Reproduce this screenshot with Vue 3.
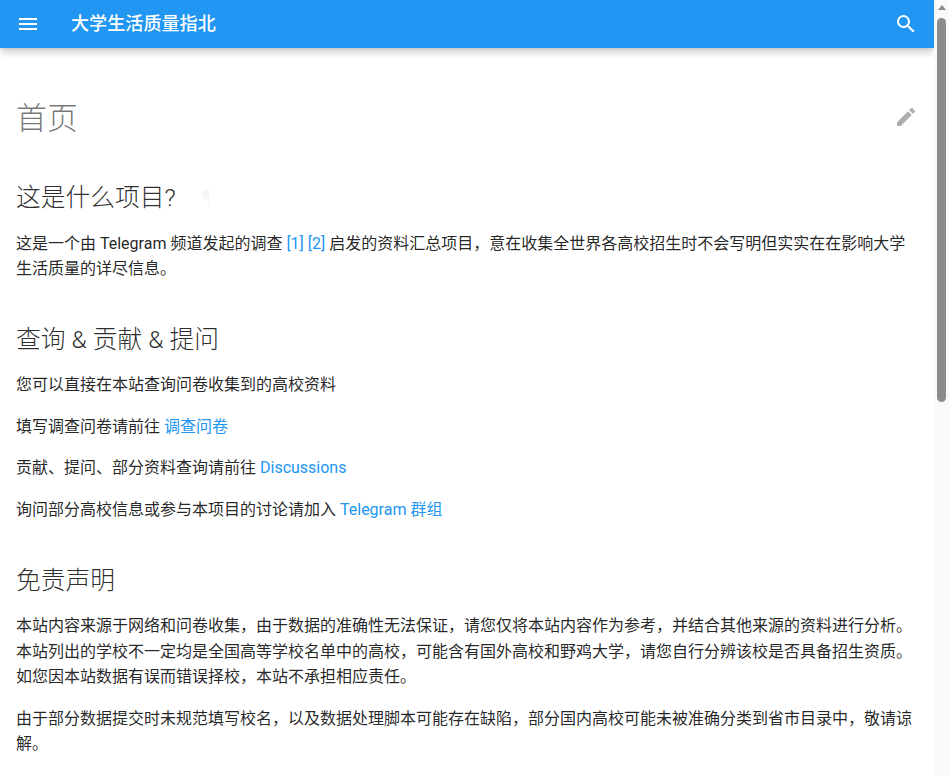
<script setup>
const menuPath = 'M3 6h18v2H3V6m0 5h18v2H3v-2m0 5h18v2H3v-2Z'
const searchPath = 'M9.5 3A6.5 6.5 0 0 1 16 9.5c0 1.61-.59 3.09-1.56 4.23l.27.27h.79l5 5-1.5 1.5-5-5v-.79l-.27-.27A6.516 6.516 0 0 1 9.5 16 6.5 6.5 0 0 1 3 9.5 6.5 6.5 0 0 1 9.5 3m0 2C7 5 5 7 5 9.5S7 14 9.5 14 14 12 14 9.5 12 5 9.5 5Z'
const pencilPath = 'M20.71 7.04c.39-.39.39-1.04 0-1.41l-2.34-2.34c-.37-.39-1.02-.39-1.41 0l-1.84 1.83 3.75 3.75M3 17.25V21h3.75L17.81 9.93l-3.75-3.75L3 17.25Z'
</script>

<template>
  <div class="page">
    <div class="main">
      <header class="bar">
        <button class="icon-btn" aria-label="menu">
          <svg viewBox="0 0 24 24" width="24" height="24"><path :d="menuPath" /></svg>
        </button>
        <div class="site-title">大学生活质量指北</div>
        <button class="icon-btn search" aria-label="search">
          <svg viewBox="0 0 24 24" width="24" height="24"><path :d="searchPath" /></svg>
        </button>
      </header>
      <article class="content">
        <a class="edit" aria-label="edit">
          <svg viewBox="0 0 24 24" width="24" height="24"><path :d="pencilPath" /></svg>
        </a>
        <h1>首页</h1>
        <h2>这是什么项目?<span class="permalink">¶</span></h2>
        <p>这是一个由 Telegram 频道发起的调查 <a>[1]</a> <a>[2]</a> 启发的资料汇总项目，意在收集全世界各高校招生时不会写明但实实在在影响大学生活质量的详尽信息。</p>
        <h2>查询 &amp; 贡献 &amp; 提问</h2>
        <p>您可以直接在本站查询问卷收集到的高校资料</p>
        <p>填写调查问卷请前往 <a>调查问卷</a></p>
        <p>贡献、提问、部分资料查询请前往 <a>Discussions</a></p>
        <p>询问部分高校信息或参与本项目的讨论请加入 <a>Telegram 群组</a></p>
        <h2>免责声明</h2>
        <p>本站内容来源于网络和问卷收集，由于数据的准确性无法保证，请您仅将本站内容作为参考，并结合其他来源的资料进行分析。本站列出的学校不一定均是全国高等学校名单中的高校，可能含有国外高校和野鸡大学，请您自行分辨该校是否具备招生资质。如您因本站数据有误而错误择校，本站不承担相应责任。</p>
        <p>由于部分数据提交时未规范填写校名，以及数据处理脚本可能存在缺陷，部分国内高校可能未被准确分类到省市目录中，敬请谅解。</p>
      </article>
    </div>
    <div class="scrollbar" aria-hidden="true">
      <div class="arrow"></div>
      <div class="thumb"></div>
    </div>
  </div>
</template>

<style scoped>
.page {
  display: flex;
  height: 776px;
  overflow: hidden;
  font-family: Roboto, "Noto Sans CJK SC", sans-serif;
  color: rgba(0, 0, 0, 0.87);
  background: #fff;
}
.main {
  flex: 1;
  min-width: 0;
}
.bar {
  display: flex;
  align-items: center;
  height: 48px;
  padding: 0 4px;
  background: #2196f3;
  color: #fff;
  box-shadow: 0 0 4px rgba(0, 0, 0, 0.1), 0 4px 8px rgba(0, 0, 0, 0.2);
  position: relative;
}
.icon-btn {
  width: 48px;
  height: 48px;
  padding: 0;
  border: 0;
  background: none;
  display: flex;
  align-items: center;
  justify-content: center;
}
.icon-btn svg {
  fill: #fff;
}
.site-title {
  flex: 1;
  margin-left: 19px;
  font-size: 18.1px;
  font-weight: 500;
  line-height: 48px;
}
.content {
  position: relative;
  padding: 24px 16px 0;
  font-size: 16px;
  line-height: 25.6px;
}
.edit {
  position: absolute;
  right: 16px;
  top: 57px;
  width: 24px;
  height: 24px;
}
.edit svg {
  fill: rgba(0, 0, 0, 0.32);
}
h1 {
  margin: 24px 0 38px;
  font-size: 31px;
  line-height: 46px;
  font-weight: 300;
  color: rgba(0, 0, 0, 0.54);
}
h2 {
  margin: 0 0 14.5px;
  font-size: 24.75px;
  line-height: 36px;
  font-weight: 300;
  color: rgba(0, 0, 0, 0.84);
}
p {
  margin: 0 0 16px;
}
p + h2 {
  margin-top: 40px;
}
a {
  color: #2196f3;
}
.permalink {
  margin-left: 24px;
  color: rgba(0, 0, 0, 0.03);
}
.scrollbar {
  flex: none;
  width: 15px;
  background: #fafafa;
  position: relative;
}
.arrow {
  margin: 5px auto 0;
  width: 0;
  height: 0;
  border-left: 4px solid transparent;
  border-right: 4px solid transparent;
  border-bottom: 5px solid #888;
}
.thumb {
  position: absolute;
  left: 3px;
  right: 3px;
  top: 18px;
  height: 384px;
  border-radius: 5px;
  background: #8c8c8c;
}
</style>
